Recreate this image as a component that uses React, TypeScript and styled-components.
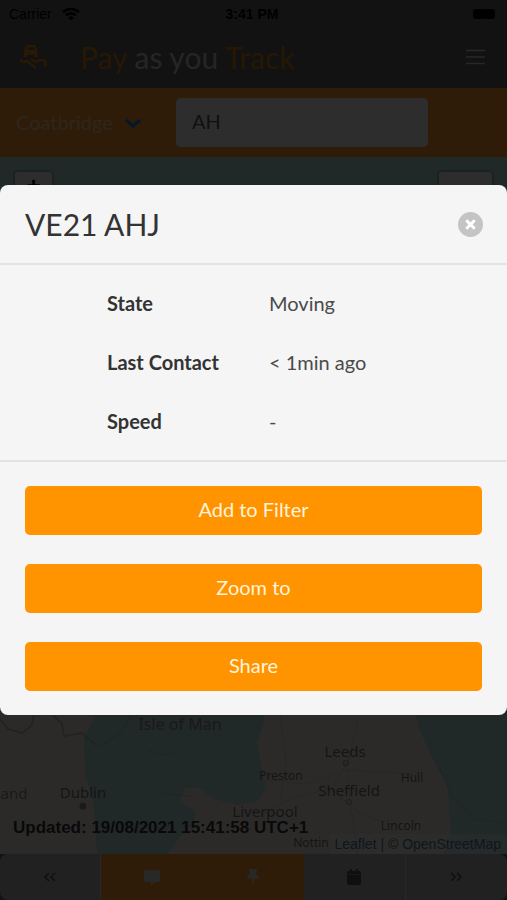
import React from "react";
import styled, { createGlobalStyle } from "styled-components";

const lato = 'Lato, "Open Sans", sans-serif';
const ios = '"Liberation Sans", Arial, sans-serif';

const Global = createGlobalStyle`
  *, *::before, *::after { box-sizing: border-box; }
  body { margin: 0; font-family: ${lato}; background: #000; }
  button, input, select { font: inherit; }
  h1, h2, dl, dd, dt, p { margin: 0; }
`;

const Screen = styled.div`
  position: relative;
  display: flex;
  flex-direction: column;
  min-height: 100vh;
`;

const Header = styled.header`
  background: #646464;
  color: #cccccc;
`;

const StatusBar = styled.div`
  display: grid;
  grid-template-columns: 1fr auto 1fr;
  align-items: center;
  height: 28px;
  padding: 0 12px 0 9px;
  font-family: ${ios};
  font-size: 14px;
  color: #000;
`;

const Carrier = styled.span`
  display: flex;
  align-items: center;
  gap: 10px;
`;

const Clock = styled.strong`
  font-weight: 700;
`;

const Battery = styled.svg`
  justify-self: end;
`;

const TitleBar = styled.div`
  display: flex;
  align-items: center;
  gap: 32px;
  height: 60px;
  padding: 0 22px 3px 20px;
`;

const Brand = styled.h1`
  flex: 1;
  font-size: 30px;
  font-weight: 400;
  line-height: 40px;
`;

const Accent = styled.span`
  color: #d08018;
`;

const MenuButton = styled.button`
  display: flex;
  padding: 0;
  border: 0;
  background: none;
  color: #d8d8d8;
`;

const FilterBar = styled.form`
  display: flex;
  align-items: center;
  height: 69px;
  padding: 0 16px;
  background: #fb9c2c;
`;

const SiteField = styled.label`
  display: flex;
  align-items: center;
  width: 160px;
  color: #1f7fdc;
`;

const SiteSelect = styled.select`
  width: 108px;
  padding: 0 0 2px;
  border: 0;
  background: none;
  appearance: none;
  font-size: 20px;
  color: #ffd0a0;
`;

const SearchInput = styled.input`
  width: 53%;
  height: 49px;
  padding: 0 16px 3px;
  border: 0;
  border-radius: 5px;
  background: #fafafa;
  font-size: 20px;
  color: #5c5c5c;
`;

const MapArea = styled.main`
  position: relative;
  flex: 1;
  overflow: hidden;
  background: #b0dada;
`;

const MapDrawing = styled.svg`
  position: absolute;
  inset: 0;
  width: 100%;
  height: 100%;
  font-family: "Noto Sans", "Open Sans", sans-serif;
`;

const MapControl = styled.button<{ $side: "left" | "right"; $width: number }>`
  position: absolute;
  top: 15px;
  ${(p) => p.$side}: 15px;
  display: flex;
  justify-content: center;
  width: ${(p) => p.$width}px;
  height: 38px;
  padding: 0;
  border: 0;
  border-radius: 3px;
  background: #f8f8f8;
  box-shadow: 0 0 0 2px rgba(0, 0, 0, 0.15);
  font-family: ${ios};
  font-size: 24px;
  font-weight: 700;
  line-height: 28px;
  color: #000;
`;

const Updated = styled.p`
  position: absolute;
  left: 13px;
  bottom: 16px;
  font-family: ${ios};
  font-size: 17px;
  font-weight: 700;
  line-height: 20px;
  color: #333;
`;

const Attribution = styled.p`
  position: absolute;
  right: 0;
  bottom: 0;
  padding: 0 6px 0 4px;
  background: rgba(255, 255, 255, 0.35);
  font-family: ${ios};
  font-size: 14px;
  line-height: 20px;
  color: #777;
`;

const MapLink = styled.a`
  color: #47809f;
  text-decoration: none;
`;

const BottomBar = styled.nav`
  display: grid;
  grid-template-columns: repeat(5, 1fr);
  height: 46px;
  background: #646464;
`;

const BottomButton = styled.button<{ $active?: boolean }>`
  display: flex;
  align-items: center;
  justify-content: center;
  padding: 0;
  border: 0;
  border-right: 1px solid ${(p) => (p.$active ? "#fb9c2c" : "#dcdcdc")};
  background: ${(p) => (p.$active ? "#fb9c2c" : "#b6b6b6")};
  color: ${(p) => (p.$active ? "#dddddd" : "#555555")};

  &:first-child {
    border-radius: 8px 0 0 8px;
  }

  &:last-child {
    border-right: 0;
    border-radius: 0 8px 8px 0;
  }
`;

const Backdrop = styled.div`
  position: absolute;
  inset: 0;
  display: flex;
  align-items: center;
  background: rgba(0, 0, 0, 0.82);
`;

const Dialog = styled.section`
  width: 100%;
  border-radius: 8px;
  background: #f5f5f5;
  color: #333;
`;

const DialogHeader = styled.header`
  display: flex;
  align-items: center;
  justify-content: space-between;
  height: 80px;
  padding: 0 24px 0 25px;
  border-bottom: 2px solid #e3e3e3;
`;

const DialogTitle = styled.h2`
  font-size: 30px;
  font-weight: 400;
  line-height: 40px;
`;

const CloseButton = styled.button`
  display: flex;
  padding: 0;
  border: 0;
  background: none;
`;

const Details = styled.dl`
  display: grid;
  grid-template-columns: 162px 1fr;
  row-gap: 31px;
  padding: 24px 25px 25px 107px;
  border-bottom: 2px solid #e3e3e3;
  font-size: 20px;
  line-height: 28px;
`;

const Term = styled.dt`
  font-weight: 700;
`;

const Value = styled.dd`
  color: #4a4a4a;
`;

const Actions = styled.div`
  display: flex;
  flex-direction: column;
  gap: 29px;
  padding: 24px 25px;
`;

const ActionButton = styled.button`
  height: 49px;
  padding: 0 0 4px;
  border: 0;
  border-radius: 5px;
  background: #ff9300;
  font-size: 20px;
  color: #fff3dc;
`;

const details = [
  ["State", "Moving"],
  ["Last Contact", "< 1min ago"],
  ["Speed", "-"],
];

const actions = ["Add to Filter", "Zoom to", "Share"];

const places = [
  { name: "Isle of Man", x: 180, y: 573, size: 16, pale: true },
  { name: "Dublin", x: 83, y: 641, size: 15 },
  { name: "and", x: 14, y: 642, size: 15, pale: true },
  { name: "Leeds", x: 345, y: 600, size: 15 },
  { name: "Preston", x: 281, y: 623, size: 12 },
  { name: "Hull", x: 412, y: 625, size: 12 },
  { name: "Sheffield", x: 349, y: 639, size: 15 },
  { name: "Liverpool", x: 265, y: 660, size: 15 },
  { name: "Lincoln", x: 401, y: 673, size: 12 },
  { name: "Nottin", x: 311, y: 690, size: 12 },
];

const WifiIcon = () => (
  <svg width="18" height="14" viewBox="0 0 18 14" fill="none" stroke="currentColor" strokeWidth="2.6">
    <path d="M1 5.2a11.5 11.5 0 0 1 16 0" />
    <path d="M4 8.4a7.2 7.2 0 0 1 10 0" />
    <path d="M9 13.5 6.2 10.7a4 4 0 0 1 5.6 0z" fill="currentColor" stroke="none" />
  </svg>
);

const TrackIcon = () => (
  <svg width="28" height="28" viewBox="0 0 28 28">
    <path
      d="M7 2h8l2.500 5v7h-3v-2H7v2H4V7zM8.200 4.200 7.200 6.800h7.600l-1.100-2.600z"
      fill="#dc8618"
      fillRule="evenodd"
    />
    <path
      d="M0 16c1.500 3 4 3.500 7 2l9 7M11 16l5 3c3-2 7-3 9.500-.5v5"
      fill="none"
      stroke="#dc8618"
      strokeWidth="2.4"
    />
  </svg>
);

const ChevronIcon = () => (
  <svg width="18" height="12" viewBox="0 0 18 12" fill="none" stroke="currentColor" strokeWidth="3.4">
    <path d="m2 3 7 6 7-6" />
  </svg>
);

const MenuIcon = () => (
  <svg width="19" height="16" viewBox="0 0 19 16" stroke="currentColor" strokeWidth="1.4">
    <path d="M0 1.500h19M0 8h19M0 14.500h19" />
  </svg>
);

const DoubleChevron = ({ right }: { right?: boolean }) => (
  <svg width="14" height="12" viewBox="0 0 14 12" fill="none" stroke="currentColor" strokeWidth="1.6">
    <path d={right ? "m2 2 4 4-4 4M8 2l4 4-4 4" : "M6 2 2 6l4 4M12 2 8 6l4 4"} />
  </svg>
);

const CommentIcon = () => (
  <svg width="16" height="15" viewBox="0 0 16 15" fill="currentColor">
    <path d="M2.500 0h11A2.500 2.500 0 0 1 16 2.500v7a2.500 2.500 0 0 1-2.500 2.500H11l-4 3v-3H2.500A2.500 2.500 0 0 1 0 9.500v-7A2.500 2.500 0 0 1 2.500 0z" />
  </svg>
);

const PinIcon = () => (
  <svg width="12" height="16" viewBox="0 0 12 16" fill="currentColor">
    <path d="M2 0h8v2H9l.5 4C11 6.500 12 7.500 12 9.500H6.700V14L6 16l-.7-2V9.500H0C0 7.500 1 6.500 2.500 6L3 2H2z" />
  </svg>
);

const CalendarIcon = () => (
  <svg width="14" height="16" viewBox="0 0 14 16" fill="currentColor">
    <path d="M3 0h2v2h4V0h2v2h1.500A1.500 1.500 0 0 1 14 3.500V5H0V3.500A1.500 1.500 0 0 1 1.500 2H3zM0 5.500h14v9a1.500 1.500 0 0 1-1.500 1.500h-11A1.500 1.500 0 0 1 0 14.500z" />
  </svg>
);

const CoastMap = () => (
  <MapDrawing viewBox="0 0 507 697" preserveAspectRatio="xMidYMax slice" aria-hidden="true">
    <g fill="#efe9e4">
      <path d="M0 500H75l15 45 4 16-10 20 1 35 9 32 3 49H0z" />
      <path d="M262 500H400l14 50 6 24 10 22 8 16 9 14 2 24 2 26-8 21H168l12-18 14-12 2-12-16-10 4-13 14-2 16 12 24 6 20-4 8-13-4-20-5-25 7-20z" />
    </g>
    <g fill="none" stroke="#bcb2b2" strokeWidth="1.600">
      <path d="M0 562l8 10 14 4 10-8 2-14M50 555l12 12 2 12 18-3 14 12" />
    </g>
    <g fill="none" stroke="#e0cfc8" strokeWidth="1.200">
      <path d="M262 657l30-16 40-10 16-26 10-40M346 605l4 40 8 52M268 623l40 4 40-14 64 4M330 631l30 26 42 14M280 555l6 50-6 40" />
    </g>
    <g fill="none" stroke="#a3cccc" strokeWidth="1.200">
      <path d="M100 590l20-14 14-22M145 590l12 8 22-2M160 636l30 3M440 612l14 30 20 20 33 4" />
    </g>
    <circle cx="83" cy="649" r="3.500" fill="#948f94" />
    <g fill="none" stroke="#aaa4a8" strokeWidth="1.200">
      <circle cx="346" cy="606" r="2.500" />
      <circle cx="349" cy="645" r="2.500" />
    </g>
    {places.map((p) => (
      <text
        key={p.name}
        x={p.x}
        y={p.y}
        fontSize={p.size}
        textAnchor="middle"
        fill={p.pale ? "#8e8a96" : "#757175"}
      >
        {p.name}
      </text>
    ))}
  </MapDrawing>
);

export default function App() {
  return (
    <Screen>
      <Global />
      <Header>
        <StatusBar>
          <Carrier>
            Carrier
            <WifiIcon />
          </Carrier>
          <Clock>3:41 PM</Clock>
          <Battery width="22" height="10">
            <rect width="22" height="10" rx="3" />
          </Battery>
        </StatusBar>
        <TitleBar>
          <TrackIcon />
          <Brand>
            <Accent>Pay</Accent> as you <Accent>Track</Accent>
          </Brand>
          <MenuButton aria-label="Menu">
            <MenuIcon />
          </MenuButton>
        </TitleBar>
      </Header>
      <FilterBar>
        <SiteField>
          <SiteSelect aria-label="Site" defaultValue="Coatbridge">
            <option>Coatbridge</option>
          </SiteSelect>
          <ChevronIcon />
        </SiteField>
        <SearchInput aria-label="Search vehicles" defaultValue="AH" />
      </FilterBar>
      <MapArea>
        <CoastMap />
        <MapControl $side="left" $width={37} aria-label="Zoom in">
          +
        </MapControl>
        <MapControl $side="right" $width={53} aria-label="Layers" />
        <Updated>Updated: 19/08/2021 15:41:58 UTC+1</Updated>
        <Attribution>
          <MapLink href="#leaflet">Leaflet</MapLink> | ©{" "}
          <MapLink href="#openstreetmap">OpenStreetMap</MapLink>
        </Attribution>
      </MapArea>
      <BottomBar>
        <BottomButton aria-label="Previous">
          <DoubleChevron />
        </BottomButton>
        <BottomButton $active aria-label="Messages">
          <CommentIcon />
        </BottomButton>
        <BottomButton $active aria-label="Pins">
          <PinIcon />
        </BottomButton>
        <BottomButton aria-label="Calendar">
          <CalendarIcon />
        </BottomButton>
        <BottomButton aria-label="Next">
          <DoubleChevron right />
        </BottomButton>
      </BottomBar>
      <Backdrop>
        <Dialog role="dialog" aria-modal="true" aria-labelledby="vehicle">
          <DialogHeader>
            <DialogTitle id="vehicle">VE21 AHJ</DialogTitle>
            <CloseButton aria-label="Close">
              <svg width="25" height="25" viewBox="0 0 25 25">
                <circle cx="12.500" cy="12.500" r="12.500" fill="#c4c4c4" />
                <path d="M8.300 8.300l8.400 8.400m0-8.400-8.400 8.400" stroke="#fff" strokeWidth="3" />
              </svg>
            </CloseButton>
          </DialogHeader>
          <Details>
            {details.map(([term, value]) => (
              <React.Fragment key={term}>
                <Term>{term}</Term>
                <Value>{value}</Value>
              </React.Fragment>
            ))}
          </Details>
          <Actions>
            {actions.map((label) => (
              <ActionButton key={label}>{label}</ActionButton>
            ))}
          </Actions>
        </Dialog>
      </Backdrop>
    </Screen>
  );
}
